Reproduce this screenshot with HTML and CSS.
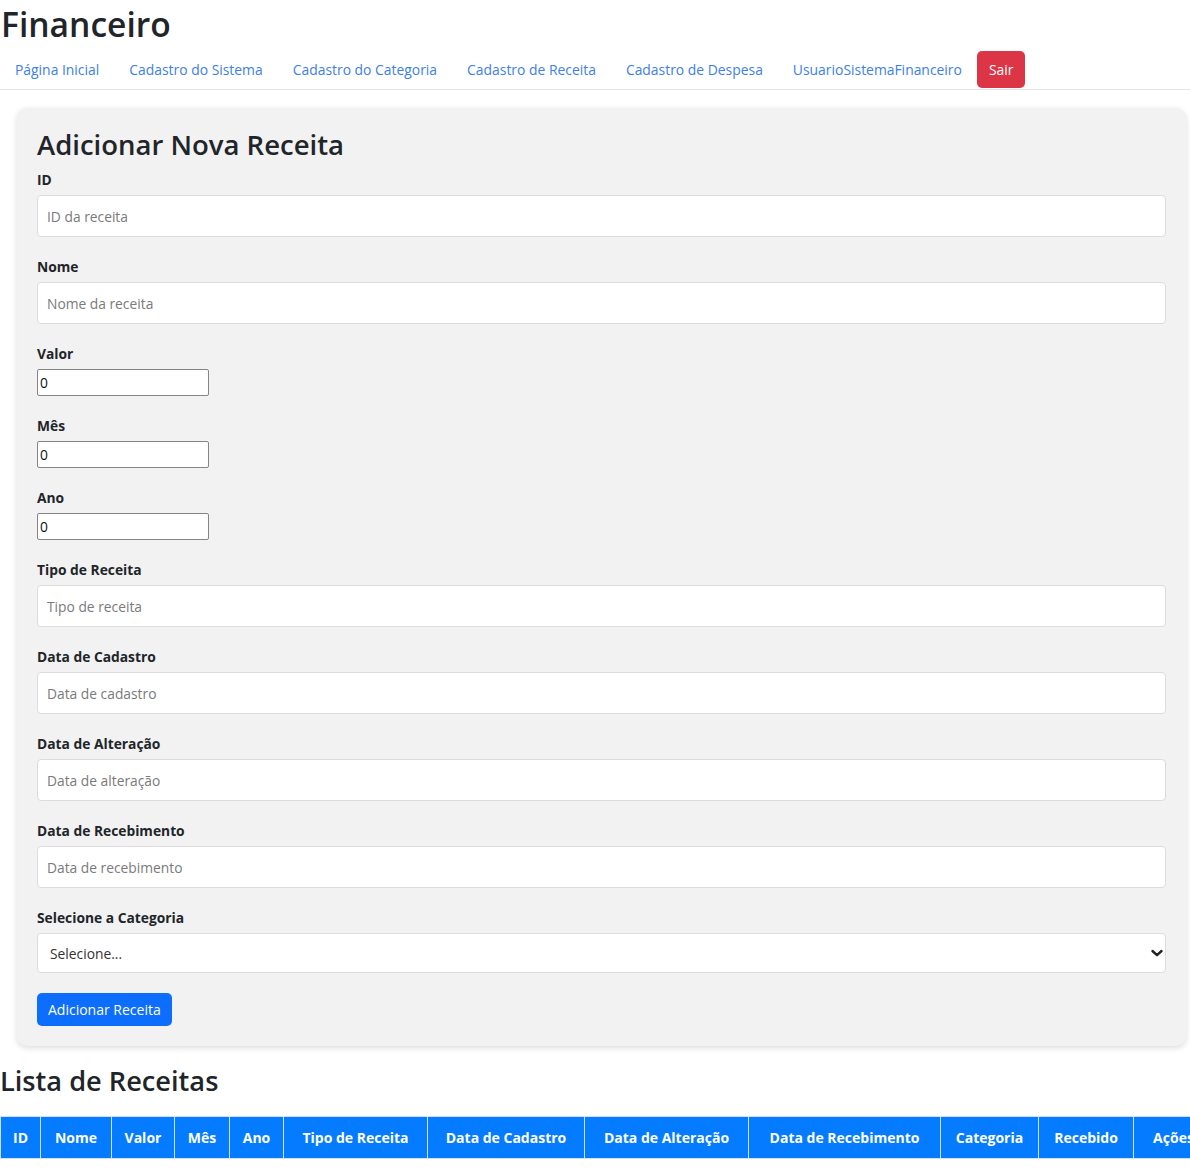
FILE: index.html
```html
<!DOCTYPE html>
<html lang="pt-BR">
<head>
<meta charset="utf-8">
<title>Financeiro</title>
<link rel="stylesheet" href="styles.css">
</head>
<body>
<h1 class="brand">Financeiro</h1>
<nav class="topnav">
  <a class="nav-link" href="#">Página Inicial</a>
  <a class="nav-link" href="#">Cadastro do Sistema</a>
  <a class="nav-link" href="#">Cadastro do Categoria</a>
  <a class="nav-link" href="#">Cadastro de Receita</a>
  <a class="nav-link" href="#">Cadastro de Despesa</a>
  <a class="nav-link" href="#">UsuarioSistemaFinanceiro</a>
  <button class="btn-sair" type="button">Sair</button>
</nav>

<section class="card">
  <h2 class="card-title">Adicionar Nova Receita</h2>
  <div class="group">
    <label class="lbl">ID</label>
    <input class="field" type="text" placeholder="ID da receita">
  </div>
  <div class="group">
    <label class="lbl">Nome</label>
    <input class="field" type="text" placeholder="Nome da receita">
  </div>
  <div class="group">
    <label class="lbl">Valor</label>
    <input class="num" type="text" value="0">
  </div>
  <div class="group">
    <label class="lbl">Mês</label>
    <input class="num" type="text" value="0">
  </div>
  <div class="group">
    <label class="lbl">Ano</label>
    <input class="num" type="text" value="0">
  </div>
  <div class="group">
    <label class="lbl">Tipo de Receita</label>
    <input class="field" type="text" placeholder="Tipo de receita">
  </div>
  <div class="group">
    <label class="lbl">Data de Cadastro</label>
    <input class="field" type="text" placeholder="Data de cadastro">
  </div>
  <div class="group">
    <label class="lbl">Data de Alteração</label>
    <input class="field" type="text" placeholder="Data de alteração">
  </div>
  <div class="group">
    <label class="lbl">Data de Recebimento</label>
    <input class="field" type="text" placeholder="Data de recebimento">
  </div>
  <div class="group">
    <label class="lbl">Selecione a Categoria</label>
    <div class="select-wrap">
      <select class="select"><option>Selecione...</option></select>
      <svg class="chev" width="12" height="10" viewBox="0 0 12 10"><path d="M1.5 3 L6 7.2 L10.5 3" fill="none" stroke="#222" stroke-width="2.4" stroke-linecap="round" stroke-linejoin="round"/></svg>
    </div>
  </div>
  <button class="btn-primary" type="button">Adicionar Receita</button>
</section>

<h2 class="list-title">Lista de Receitas</h2>
<div class="table-wrap">
<table class="tbl">
  <colgroup>
    <col style="width:40px"><col style="width:71px"><col style="width:63px"><col style="width:55px"><col style="width:54px"><col style="width:144px"><col style="width:157px"><col style="width:164px"><col style="width:192px"><col style="width:98px"><col style="width:95px"><col style="width:80px">
  </colgroup>
  <thead>
    <tr>
      <th>ID</th><th>Nome</th><th>Valor</th><th>Mês</th><th>Ano</th><th>Tipo de Receita</th><th>Data de Cadastro</th><th>Data de Alteração</th><th>Data de Recebimento</th><th>Categoria</th><th>Recebido</th><th>Ações</th>
    </tr>
  </thead>
</table>
</div>
</body>
</html>
```

FILE: styles.css
```css
html, body {
  margin: 0;
  padding: 0;
  background: #fff;
}
body {
  font-family: "Open Sans", "Noto Sans", sans-serif;
  font-size: 14px;
  color: #212529;
  overflow-x: hidden;
}
.brand {
  margin: 0;
  padding: 0 0 0 1px;
  font-size: 33.6px;
  font-weight: 600;
  line-height: 48px;
  color: #212529;
}
.topnav {
  display: flex;
  align-items: center;
  height: 37px;
  margin-top: 3px;
  border-bottom: 1px solid #e3e5e8;
  padding-bottom: 1px;
}
.nav-link {
  color: #3d7fe6;
  text-decoration: none;
  padding: 0 15px;
  font-size: 13.9px;
  line-height: 22px;
}
.btn-sair {
  background: #dc3545;
  color: #fff;
  border: 0;
  border-radius: 5px;
  height: 37px;
  padding: 0 12px;
  font-family: inherit;
  font-size: 13.9px;
}
.card {
  margin: 18px 4px 0 17px;
  background: #f2f2f2;
  border-radius: 10px;
  box-shadow: 0 2px 6px rgba(0, 0, 0, 0.14);
  padding: 16px 20px 20px;
}
.card-title {
  margin: 0 0 4px;
  font-size: 27.5px;
  font-weight: 600;
  line-height: 42px;
}
.group {
  margin-bottom: 20px;
}
.lbl {
  display: block;
  font-weight: 700;
  font-size: 13.8px;
  line-height: 20px;
  margin-bottom: 5px;
}
.field {
  display: block;
  box-sizing: border-box;
  width: 100%;
  height: 42px;
  border: 1px solid #dcdcdc;
  border-radius: 4px;
  background: #fff;
  padding: 0 9px;
  font-family: inherit;
  font-size: 13.8px;
  color: #212529;
  outline: none;
}
.field::placeholder {
  color: #7a7a7a;
}
.num {
  display: block;
  box-sizing: border-box;
  width: 172px;
  height: 27px;
  border: 1px solid #858585;
  border-radius: 2px;
  background: #fff;
  padding: 0 2px;
  font-family: inherit;
  font-size: 13.8px;
  color: #111;
  outline: none;
}
.select-wrap {
  position: relative;
}
.select {
  display: block;
  box-sizing: border-box;
  width: 100%;
  height: 40px;
  border: 1px solid #dcdcdc;
  border-radius: 4px;
  background: #fff;
  padding: 0 12px;
  font-family: inherit;
  font-size: 13.8px;
  color: #333;
  appearance: none;
  -webkit-appearance: none;
  outline: none;
}
.chev {
  position: absolute;
  right: 3px;
  top: 15px;
  pointer-events: none;
}
.btn-primary {
  background: #0d6efd;
  color: #fff;
  border: 0;
  border-radius: 5px;
  height: 33px;
  padding: 0 11px;
  font-family: inherit;
  font-size: 14px;
}
.list-title {
  margin: 14px 0 0;
  font-size: 27.2px;
  font-weight: 600;
  line-height: 42px;
}
.table-wrap {
  margin-top: 14px;
  overflow: hidden;
}
.tbl {
  border-collapse: collapse;
  table-layout: fixed;
  width: 1213px;
}
.tbl th {
  background: #057bff;
  color: #fff;
  font-weight: 700;
  font-size: 14px;
  height: 41px;
  padding: 0;
  text-align: center;
  border: 1px solid #cfe2f7;
  white-space: nowrap;
}
```
